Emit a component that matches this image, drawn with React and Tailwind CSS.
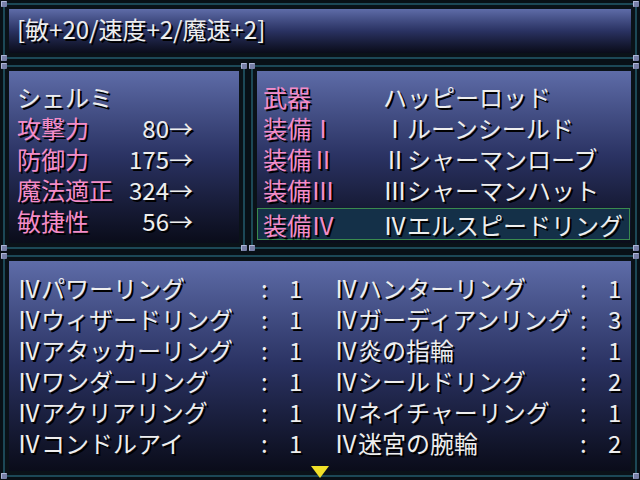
const FONT = { fontFamily: '"Noto Sans CJK JP", "Noto Sans", sans-serif' };

const STATS = [
  { label: "攻撃力", value: "80" },
  { label: "防御力", value: "175" },
  { label: "魔法適正", value: "324" },
  { label: "敏捷性", value: "56" },
];

const SLOTS = [
  { label: "武器", item: "ハッピーロッド" },
  { label: "装備Ⅰ", item: "Ⅰルーンシールド" },
  { label: "装備Ⅱ", item: "Ⅱシャーマンローブ" },
  { label: "装備Ⅲ", item: "Ⅲシャーマンハット" },
  { label: "装備Ⅳ", item: "Ⅳエルスピードリング", selected: true },
];

const ITEMS = [
  ["Ⅳパワーリング", "1", "Ⅳハンターリング", "1"],
  ["Ⅳウィザードリング", "1", "Ⅳガーディアンリング", "3"],
  ["Ⅳアタッカーリング", "1", "Ⅳ炎の指輪", "1"],
  ["Ⅳワンダーリング", "1", "Ⅳシールドリング", "2"],
  ["Ⅳアクリアリング", "1", "Ⅳネイチャーリング", "1"],
  ["Ⅳコンドルアイ", "1", "Ⅳ迷宮の腕輪", "2"],
];

function Knob({ pos }) {
  return (
    <div
      className={`absolute ${pos} w-[6px] h-[6px] rounded-[1px] bg-[#7880a8] border-t border-l border-[#b0b8d8] border-b-[#3a4060] border-r-[#3a4060]`}
    />
  );
}

function Win({ className = "", children }) {
  return (
    <div className={`relative bg-[#081016] p-[3px] ${className}`}>
      <div className="h-full border-2 border-[#1c4856] bg-[#0a1218] p-[4px]">
        <div className="h-full bg-gradient-to-b from-[#5e6ca8] via-[#2a3262] to-[#0a0c1a] overflow-hidden">
          {children}
        </div>
      </div>
      <Knob pos="left-[1px] top-[1px]" />
      <Knob pos="right-[1px] top-[1px]" />
      <Knob pos="left-[1px] bottom-[1px]" />
      <Knob pos="right-[1px] bottom-[1px]" />
    </div>
  );
}

const txt = "text-[24px] leading-[31px] [text-shadow:2px_2px_0_#000] whitespace-nowrap";

export default function App() {
  return (
    <div className="w-[640px] h-[480px] bg-[#050a0e] flex flex-col overflow-hidden" style={FONT}>
      <Win className="h-[62px]">
        <div className={`${txt} text-[#eeeeee] pl-[8px] pt-[4px]`}>[敏+20/速度+2/魔速+2]</div>
      </Win>

      <div className="flex h-[190px]">
        <Win className="w-[248px]">
          <div className="pl-[8px] pt-[10px]">
            <div className={`${txt} text-[#eeeeee]`}>シェルミ</div>
            {STATS.map((s) => (
              <div key={s.label} className={`${txt} flex`}>
                <span className="w-[110px] text-[#f48cc8]">{s.label}</span>
                <span className="w-[42px] text-right text-[#eeeeee]">{s.value}</span>
                <span className="text-[#eeeeee]">→</span>
              </div>
            ))}
          </div>
        </Win>

        <Win className="flex-1">
          <div className="pt-[10px] pr-[1px] pl-[0px]">
            {SLOTS.map((s) =>
              s.selected ? (
                <div
                  key={s.label}
                  className={`${txt} flex mt-[3px] h-[32px] leading-[29px] border border-[#3a8a4e] bg-[#143048] pl-[5px]`}
                >
                  <span className="w-[120px] text-[#f48cc8]">{s.label}</span>
                  <span className="text-[#eeeeee]">{s.item}</span>
                </div>
              ) : (
                <div key={s.label} className={`${txt} flex pl-[6px]`}>
                  <span className="w-[120px] text-[#f48cc8]">{s.label}</span>
                  <span className="text-[#eeeeee]">{s.item}</span>
                </div>
              )
            )}
          </div>
        </Win>
      </div>

      <Win className="flex-1">
        <div className="pl-[8px] pt-[11px]">
          {ITEMS.map((r, i) => (
            <div key={i} className={`${txt} leading-[31.5px] flex text-[#eeeeee]`}>
              <span className="w-[244px]">{r[0]}</span>
              <span className="w-[28px]">:</span>
              <span className="w-[12px] text-right">{r[1]}</span>
              <span className="w-[33px]" />
              <span className="w-[246px]">{r[2]}</span>
              <span className="w-[28px]">:</span>
              <span className="w-[12px] text-right">{r[3]}</span>
            </div>
          ))}
        </div>
        <div className="absolute left-[311px] bottom-[2px] w-0 h-0 border-l-[9px] border-r-[9px] border-t-[12px] border-l-transparent border-r-transparent border-t-[#f0e028]" />
      </Win>
    </div>
  );
}
